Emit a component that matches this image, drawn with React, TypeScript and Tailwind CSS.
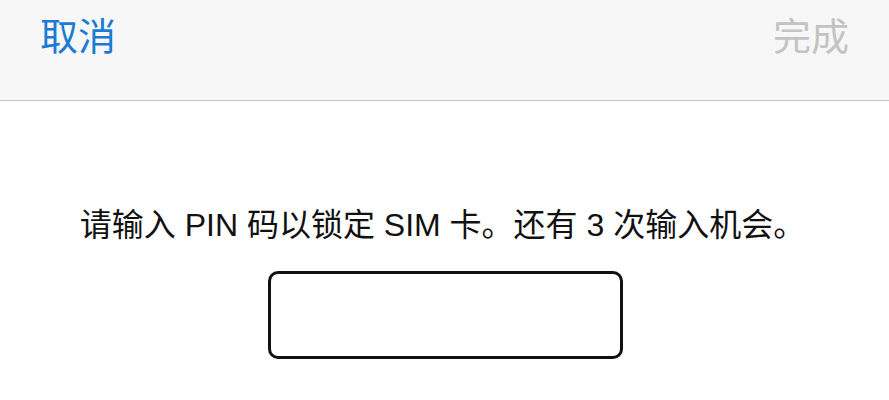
export default function App() {
  return (
    <div
      className="w-[889px] h-[400px] bg-white overflow-hidden flex flex-col"
      style={{ fontFamily: '"Noto Sans CJK SC", "Noto Sans", sans-serif' }}
    >
      <div className="h-[101px] bg-[#f7f7f7] border-b border-[#c6c6c6] flex items-start justify-between px-[40px] pt-[9px] shrink-0">
        <span className="text-[38px] leading-[50px] text-[#1c7bd3]">取消</span>
        <span className="text-[38px] leading-[50px] text-[#c3c3c3]">完成</span>
      </div>
      <div className="flex flex-col items-center pt-[101px]">
        <p
          className="text-[32px] leading-[46px] text-[#111] ml-[-4px]"
          style={{ fontFamily: '"Liberation Sans", "Noto Sans CJK SC", sans-serif' }}
        >
          请输入 PIN 码以锁定 SIM 卡。还有 3 次输入机会。
        </p>
        <div className="mt-[23px] w-[355px] h-[88px] border-[3px] border-[#111] rounded-[10px] ml-[1px]" />
      </div>
    </div>
  );
}
